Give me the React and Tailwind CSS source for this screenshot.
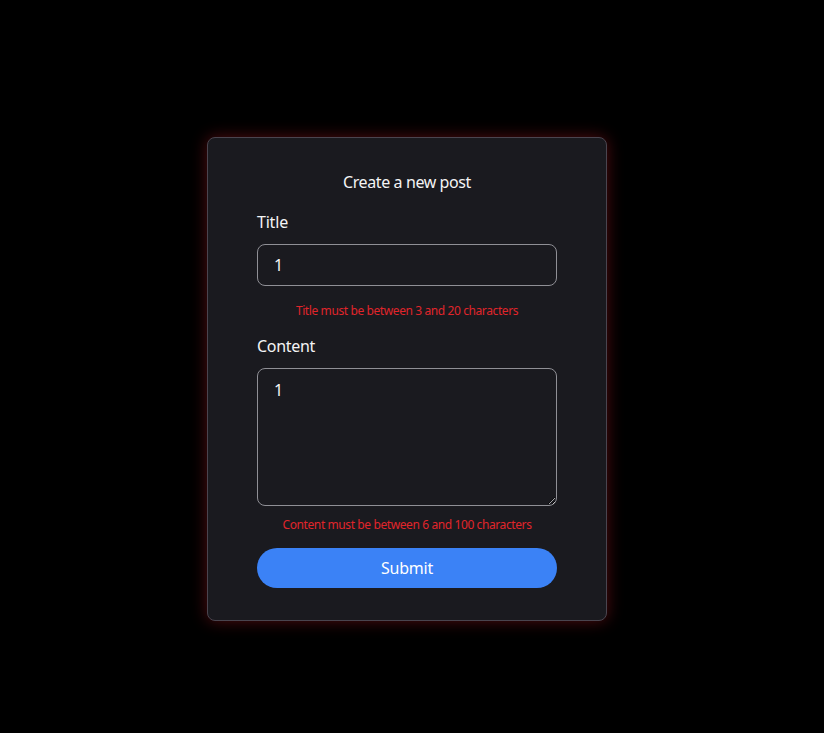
export default function App() {
  return (
    <div
      className="min-h-[733px] w-full bg-black pt-[137px] pl-[207px]"
      style={{ fontFamily: '"Noto Sans", "Open Sans", sans-serif' }}
    >
      <div className="w-[400px] rounded-lg border border-[#4a454f] bg-[#1a1a1f] px-[49px] pt-[32px] pb-[32px] shadow-[0_0_16px_rgba(200,30,40,0.4)]">
        <h1 className="text-center text-[16px] leading-[24px] tracking-[-0.4px] text-[#f4f4f5]">Create a new post</h1>
        <label className="mt-4 block text-[16px] leading-[24px] tracking-[-0.2px] text-[#f4f4f5]">Title</label>
        <input
          defaultValue="1"
          className="mt-[10px] block h-[42px] w-[300px] rounded-lg border border-[#8f8f95] bg-[#1a1a1f] px-[16px] text-[16px] text-[#f4f4f5] outline-none"
        />
        <p className="mt-[17px] text-center text-[12px] leading-[16px] tracking-[-0.4px] text-[#e0252b]">Title must be between 3 and 20 characters</p>
        <label className="mt-[15px] block text-[16px] leading-[24px] tracking-[-0.3px] text-[#f4f4f5]">Content</label>
        <textarea
          defaultValue="1"
          className="mt-[10px] block h-[138px] w-[300px] rounded-lg border border-[#8f8f95] bg-[#1a1a1f] px-[16px] py-[9px] text-[16px] leading-[24px] text-[#f4f4f5] outline-none"
        />
        <p className="mt-[11px] text-center text-[12px] leading-[16px] tracking-[-0.4px] text-[#e0252b]">Content must be between 6 and 100 characters</p>
        <button className="mt-[15px] block h-10 w-[300px] rounded-full bg-[#3b82f6] text-[16px] tracking-[-0.2px] text-white">Submit</button>
      </div>
    </div>
  );
}
